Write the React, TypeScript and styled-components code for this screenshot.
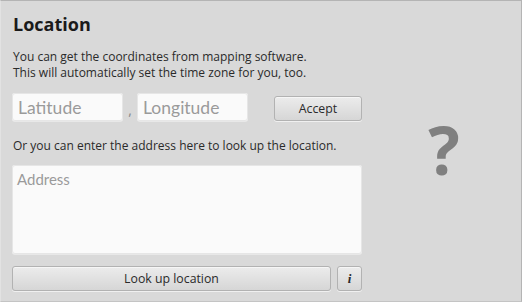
import styled, { createGlobalStyle } from "styled-components";

const Global = createGlobalStyle`
  html, body {
    margin: 0;
    padding: 0;
    background: #d9d9d9;
  }
  * {
    box-sizing: border-box;
  }
`;

const Frame = styled.div`
  width: 522px;
  height: 302px;
  display: flex;
  background: #d9d9d9;
  border: 1px solid #b4b4b4;
  border-left-color: #e2e2e2;
  border-bottom-color: #c4c4c4;
  font-family: "Open Sans", "Noto Sans", sans-serif;
  color: #222;
`;

const Form = styled.section`
  width: 362px;
  padding: 10px 0 0 11px;
  display: flex;
  flex-direction: column;
`;

const Title = styled.h1`
  margin: 0 0 0 1px;
  font-size: 18px;
  font-weight: 700;
  line-height: 26px;
  color: #1a1a1a;
`;

const Text = styled.p<{ $gap?: number }>`
  margin: ${(p) => p.$gap ?? 12}px 0 0 1px;
  font-size: 12px;
  line-height: 16px;
  color: #2a2a2a;
  white-space: nowrap;
`;

const Row = styled.div`
  display: flex;
  align-items: flex-end;
  margin-top: 12px;
  height: 28px;
`;

const Field = styled.input`
  width: 111px;
  height: 28px;
  padding: 0 6px;
  border: none;
  border-radius: 3px;
  background: #fafafa;
  box-shadow: 0 1px 0 #e8e8e8, inset 0 0 0 1px #e6e6e6;
  font-family: Lato, "Open Sans", sans-serif;
  font-size: 17.5px;
  color: #333;
  outline: none;
  &::placeholder {
    color: #9a9a9a;
  }
`;

const Comma = styled.span`
  width: 14px;
  text-align: center;
  font-size: 14px;
  line-height: 22px;
  color: #888;
`;

const Button = styled.button<{ $wide?: boolean }>`
  height: 25px;
  ${(p) => (p.$wide ? "flex: 1;" : "")}
  border: 1px solid #b2b2b2;
  border-radius: 3px;
  background: linear-gradient(180deg, #ececec 0%, #d6d6d6 100%);
  box-shadow: inset 0 1px 0 #f6f6f6, 0 1px 0 #f0f0f0;
  font-family: "Open Sans", "Noto Sans", sans-serif;
  font-size: 12.3px;
  color: #2a2a2a;
  padding: 0;
`;

const AcceptButton = styled(Button)`
  width: 88px;
  margin-left: 26px;
`;

const InfoButton = styled(Button)`
  width: 25px;
  margin-left: 6px;
  font-family: "Liberation Serif", serif;
  font-style: italic;
  font-weight: 700;
  font-size: 13px;
`;

const Area = styled.textarea`
  margin-top: 11px;
  width: 350px;
  height: 89px;
  padding: 5px 5px;
  border: none;
  border-radius: 3px;
  resize: none;
  background: #fafafa;
  box-shadow: 0 1px 0 #e8e8e8, inset 0 0 0 1px #e6e6e6;
  font-family: Lato, "Open Sans", sans-serif;
  font-size: 15px;
  outline: none;
  &::placeholder {
    color: #9a9a9a;
  }
`;

const Actions = styled.div`
  display: flex;
  width: 350px;
  margin-top: 12px;
`;

const Preview = styled.div`
  flex: 1;
  display: flex;
  align-items: center;
  justify-content: center;
  padding-bottom: 4px;
  padding-left: 4px;
`;

const Mark = styled.span`
  font-family: "Open Sans", "Noto Sans", sans-serif;
  font-size: 66px;
  font-weight: 700;
  color: #808080;
`;

export default function App() {
  return (
    <>
      <Global />
      <Frame>
        <Form>
          <Title>Location</Title>
          <Text>
            You can get the coordinates from mapping software.
            <br />
            This will automatically set the time zone for you, too.
          </Text>
          <Row>
            <Field placeholder="Latitude" />
            <Comma>,</Comma>
            <Field placeholder="Longitude" />
            <AcceptButton>Accept</AcceptButton>
          </Row>
          <Text $gap={17}>
            Or you can enter the address here to look up the location.
          </Text>
          <Area placeholder="Address" />
          <Actions>
            <Button $wide>Look up location</Button>
            <InfoButton>i</InfoButton>
          </Actions>
        </Form>
        <Preview>
          <Mark>?</Mark>
        </Preview>
      </Frame>
    </>
  );
}
